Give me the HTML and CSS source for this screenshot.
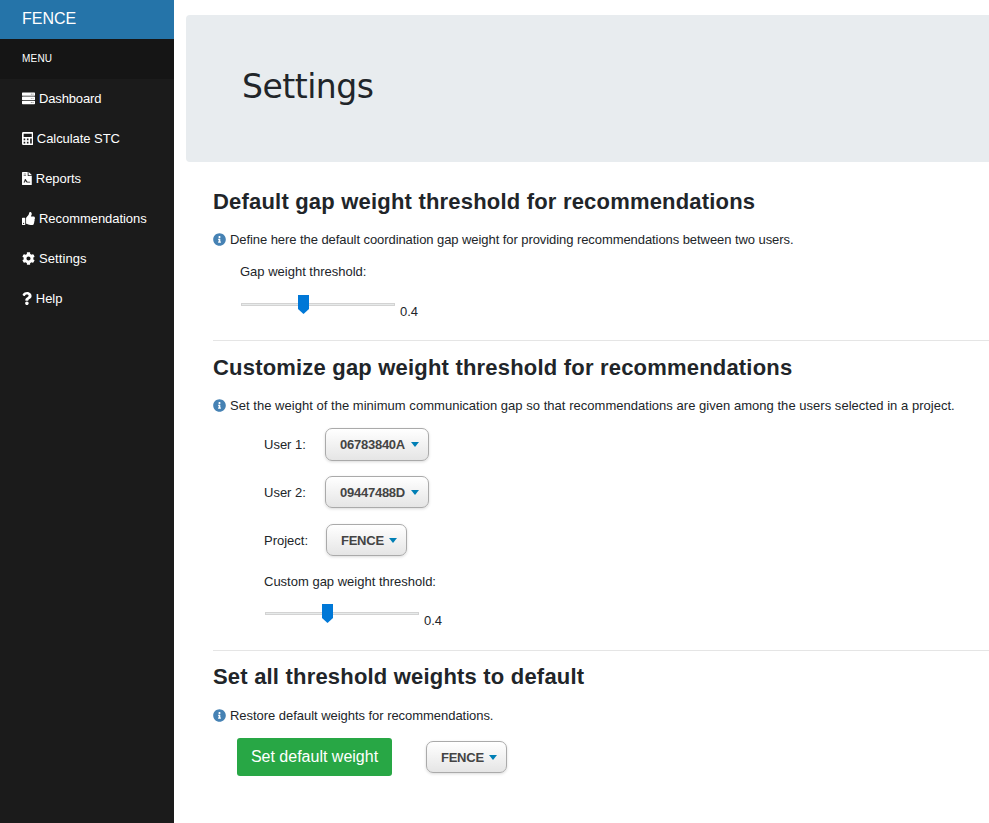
FILE: index.html
```html
<!DOCTYPE html>
<html lang="en">
<head>
<meta charset="utf-8">
<title>FENCE - Settings</title>
<link rel="stylesheet" href="styles.css">
</head>
<body>
<svg class="defs" aria-hidden="true">
  <symbol id="info" viewBox="0 0 512 512"><path d="M256 8C119 8 8 119 8 256s111 248 248 248 248-111 248-248S393 8 256 8zm0 110c23.200 0 42 18.800 42 42s-18.800 42-42 42-42-18.800-42-42 18.800-42 42-42zm56 254c0 6.600-5.400 12-12 12h-88c-6.600 0-12-5.400-12-12v-24c0-6.600 5.400-12 12-12h12v-64h-12c-6.600 0-12-5.400-12-12v-24c0-6.600 5.400-12 12-12h64c6.600 0 12 5.400 12 12v100h12c6.600 0 12 5.400 12 12v24z"/></symbol>
  <symbol id="thumb" viewBox="0 0 11 19"><path d="M0 0h11v14l-5.500 5L0 14z"/></symbol>
</svg>
<div class="layout">
  <nav class="sidebar">
    <div class="brand">FENCE</div>
    <div class="menu-title">MENU</div>
    <a class="item"><svg class="w13" viewBox="0 0 512 512"><path fill-rule="evenodd" d="M24 16h464q24 0 24 24v88q0 24-24 24H24q-24 0-24-24V40q0-24 24-24zM24 180h464q24 0 24 24v88q0 24-24 24H24q-24 0-24-24v-88q0-24 24-24zM24 344h464q24 0 24 24v88q0 24-24 24H24q-24 0-24-24v-88q0-24 24-24zM420 68h28v28h-28zM350 68h28v28h-28zM420 232h28v28h-28zM350 232h28v28h-28zM420 396h28v28h-28zM350 396h28v28h-28z"/></svg><span class="t-dash">Dashboard</span></a>
    <a class="item"><svg class="w11" viewBox="0 0 448 512"><path fill-rule="evenodd" d="M48 0h352q48 0 48 48v416q0 48-48 48H48q-48 0-48-48V48Q0 0 48 0zM64 64v128h320V64zM64 256v64h64v-64zM192 256v64h64v-64zM64 384v64h64v-64zM192 384v64h64v-64zM320 256v192h64V256z"/></svg><span class="t-calc">Calculate STC</span></a>
    <a class="item"><svg class="w10" viewBox="0 0 384 512"><path fill-rule="evenodd" d="M24 0h200v136q0 24 24 24h136v328q0 24-24 24H24q-24 0-24-24V24Q0 0 24 0zM256 0h6l122 122v6H256zM64 64v24h96V64zM64 128v24h96v-24zM64 416h48l28-74 24 48q20 26 42 26h114v-32H220q-14 0-24-18-20-36-56-88-24-8-36 20l-20 86H64z"/></svg><span>Reports</span></a>
    <a class="item"><svg class="w13" viewBox="0 0 512 512"><path fill-rule="evenodd" d="M104 224H24c-13.255 0-24 10.745-24 24v240c0 13.255 10.745 24 24 24h80c13.255 0 24-10.745 24-24V248c0-13.255-10.745-24-24-24zM64 472c-13.255 0-24-10.745-24-24s10.745-24 24-24 24 10.745 24 24-10.745 24-24 24zM384 81.452c0 42.416-25.970 66.208-33.277 94.548h101.723c33.397 0 59.397 27.746 59.553 58.098.084 17.938-7.546 37.249-19.439 49.197l-.110.110c9.836 23.337 8.237 56.037-9.308 79.469 8.681 25.895-.069 57.704-16.382 74.757 4.298 17.598 2.244 32.575-6.148 44.632C440.202 511.587 389.616 512 346.839 512l-2.845-.001c-48.287-.017-87.806-17.598-119.560-31.725-15.957-7.099-36.821-15.887-52.651-16.178-6.540-.120-11.783-5.457-11.783-11.998v-213.770c0-3.200 1.282-6.271 3.558-8.521 39.614-39.144 56.648-80.587 89.117-113.111 14.804-14.832 20.188-37.236 25.393-58.902C282.515 39.293 291.817 0 312 0c24 0 72 8 72 81.452z"/></svg><span>Recommendations</span></a>
    <a class="item"><svg class="w13" viewBox="0 0 512 512"><path d="M487.400 315.700l-42.600-24.600c4.300-23.200 4.300-47 0-70.200l42.600-24.600c4.900-2.800 7.100-8.600 5.500-14-11.100-35.600-30-67.800-54.700-94.600-3.800-4.100-10-5.100-14.800-2.300L380.800 110c-17.900-15.400-38.500-27.300-60.800-35.100V25.800c0-5.600-3.900-10.500-9.400-11.700-36.700-8.200-74.300-7.800-109.200 0-5.500 1.200-9.400 6.100-9.400 11.700V75c-22.200 7.900-42.800 19.800-60.800 35.100L88.700 85.500c-4.900-2.800-11-1.900-14.800 2.300-24.700 26.700-43.600 58.900-54.700 94.600-1.700 5.400.6 11.200 5.500 14L67.300 221c-4.300 23.200-4.300 47 0 70.200l-42.600 24.600c-4.900 2.800-7.100 8.600-5.500 14 11.100 35.600 30 67.800 54.700 94.600 3.800 4.100 10 5.100 14.800 2.300l42.600-24.600c17.900 15.400 38.500 27.300 60.800 35.100v49.200c0 5.600 3.900 10.500 9.400 11.700 36.700 8.200 74.300 7.800 109.200 0 5.500-1.200 9.400-6.100 9.400-11.700v-49.200c22.200-7.900 42.800-19.800 60.800-35.100l42.600 24.600c4.900 2.800 11 1.900 14.800-2.300 24.700-26.700 43.600-58.900 54.700-94.600 1.500-5.500-.7-11.300-5.600-14.100zM256 336c-44.100 0-80-35.900-80-80s35.900-80 80-80 80 35.900 80 80-35.900 80-80 80z"/></svg><span class="t-set">Settings</span></a>
    <a class="item"><svg class="w10" viewBox="0 0 384 512"><path d="M202 0C122 0 69 33 28 91c-8 11-6 25 5 33l43 33c11 8 25 6 33-4 26-32 44-50 84-50 30 0 67 19 67 49 0 22-18 33-48 50-35 20-82 45-82 107v11c0 13 11 24 24 24h72c13 0 24-11 24-24v-6c0-43 126-45 126-161C376 66 285 0 202 0zM192 373c-38 0-69 31-69 69s31 70 69 70 70-31 70-70-32-69-70-69z"/></svg><span>Help</span></a>
  </nav>
  <main>
    <header class="jumbotron"><h1>Settings</h1></header>
    <section class="s1">
      <h2>Default gap weight threshold for recommendations</h2>
      <p><svg class="info"><use href="#info"/></svg><span class="d1">Define here the default coordination gap weight for providing recommendations between two users.</span></p>
      <div class="block">
        <div class="label">Gap weight threshold:</div>
        <div class="range"><div class="track"><svg class="knob"><use href="#thumb"/></svg></div><span>0.4</span></div>
      </div>
    </section>
    <section class="s2">
      <h2>Customize gap weight threshold for recommendations</h2>
      <p><svg class="info"><use href="#info"/></svg><span class="d2">Set the weight of the minimum communication gap so that recommendations are given among the users selected in a project.</span></p>
      <div class="fields">
        <div class="field first"><span class="name">User 1:</span><button class="drop user">06783840A<i></i></button></div>
        <div class="field"><span class="name">User 2:</span><button class="drop user">09447488D<i></i></button></div>
        <div class="field"><span class="name project">Project:</span><button class="drop">FENCE<i></i></button></div>
        <div class="label">Custom gap weight threshold:</div>
        <div class="range"><div class="track"><svg class="knob"><use href="#thumb"/></svg></div><span>0.4</span></div>
      </div>
    </section>
    <section class="s3">
      <h2>Set all threshold weights to default</h2>
      <p><svg class="info"><use href="#info"/></svg><span class="d3">Restore default weights for recommendations.</span></p>
      <div class="actions"><button class="primary">Set default weight</button><button class="drop">FENCE<i></i></button></div>
    </section>
  </main>
</div>
</body>
</html>
```
FILE: styles.css
```css
* { box-sizing: border-box; }
body {
  margin: 0;
  background: #fff;
  color: #212529;
  font: 13px/20px "Liberation Sans", Arial, sans-serif;
}
.defs { display: none; }
.layout { display: flex; height: 823px; overflow: hidden; }
.sidebar { flex: 0 0 174px; background: #1b1b1b; color: #fff; }
.brand { height: 39px; padding-left: 22px; background: #2574a9; font-size: 16px; line-height: 37px; }
.menu-title { height: 40px; padding-left: 22px; background: #151515; font-size: 10px; line-height: 40px; letter-spacing: .2px; }
.item { display: flex; align-items: center; gap: 4px; height: 40px; padding-left: 22px; white-space: nowrap; letter-spacing: -.05px; }
.item svg { height: 13px; margin-bottom: 1px; fill: #fff; flex: none; }
.w13 { width: 13px; }
.w11 { width: 11.400px; }
.t-dash { letter-spacing: -.15px; }
.t-calc { margin-left: -.6px; }
.t-set { letter-spacing: .08px; }
.w10 { width: 9.800px; }
main { flex: 1; min-width: 0; padding: 15px 0 0 12px; }
.jumbotron { height: 147px; padding: 48px 0 0 56px; border-radius: 4px 0 0 4px; background: #e8ecef; }
h1 { margin: 0; font: 400 33px/48px "DejaVu Sans", Verdana, sans-serif; letter-spacing: -.5px; }
section { margin-left: 27px; white-space: nowrap; }
.s1 { height: 179px; padding-top: 27px; border-bottom: 1px solid #e5e5e5; }
.s2 { height: 310px; padding-top: 14px; border-bottom: 1px solid #e5e5e5; }
.s3 { padding-top: 13px; }
h2 { margin: 0 0 15px; font-size: 22px; line-height: 26px; font-weight: 700; letter-spacing: .195px; }
p { display: flex; align-items: center; gap: 4px; height: 20px; margin: 0; }
.s3 p { margin-top: 16px; }
.s3 h2 { margin-bottom: 0; }
.d1 { letter-spacing: -.07px; }
.d2 { letter-spacing: .03px; }
.d3 { letter-spacing: -.04px; }
.info { width: 13px; height: 13px; margin-bottom: 2px; fill: #4682b4; }
.block { padding: 12px 0 0 27px; }
.range { display: flex; align-items: flex-start; height: 39px; padding-top: 21px; }
.track { position: relative; width: 154px; height: 3px; margin: 0 5px 0 1px; border: 1px solid #d3d3d3; background: #e7eaea; }
.range span { margin-top: -1px; }
.knob { position: absolute; left: 56px; top: -9px; width: 11px; height: 19px; fill: #0078d7; }
.fields { padding: 12px 0 0 51px; }
.field { display: flex; align-items: center; height: 32px; margin-bottom: 16px; }
.field.first { height: 33px; margin-bottom: 15px; }
.name { width: 61px; padding-top: 2px; }
.name.project { width: 62px; }
.first .name { padding-top: 0; }
.fields .range { padding-top: 20px; }
.drop {
  display: flex; align-items: center; gap: 5px;
  width: 81px; height: 32px; padding: 2px 0 0 14px;
  border: 1px solid #aaa; border-radius: 7px;
  background: linear-gradient(#fff, #e5e5e5);
  box-shadow: 0 1px 3px rgba(0,0,0,.15);
  color: #444; font: 700 13px/20px "Liberation Sans", Arial, sans-serif;
  letter-spacing: -.25px;
}
.drop.user { width: 104px; gap: 6px; }
.first .drop { height: 33px; padding-top: 0; }
.drop i { margin-bottom: 1px; border: 4.500px solid transparent; border-top: 5px solid #007fb5; border-bottom: 0; }
.actions { display: flex; align-items: center; gap: 34px; padding: 12px 0 0 24px; }
.primary { width: 155px; height: 38px; padding: 0; border: 0; border-radius: 3px; background: #28a745; color: #fff; font: 16px/24px "Liberation Sans", Arial, sans-serif; }
```
